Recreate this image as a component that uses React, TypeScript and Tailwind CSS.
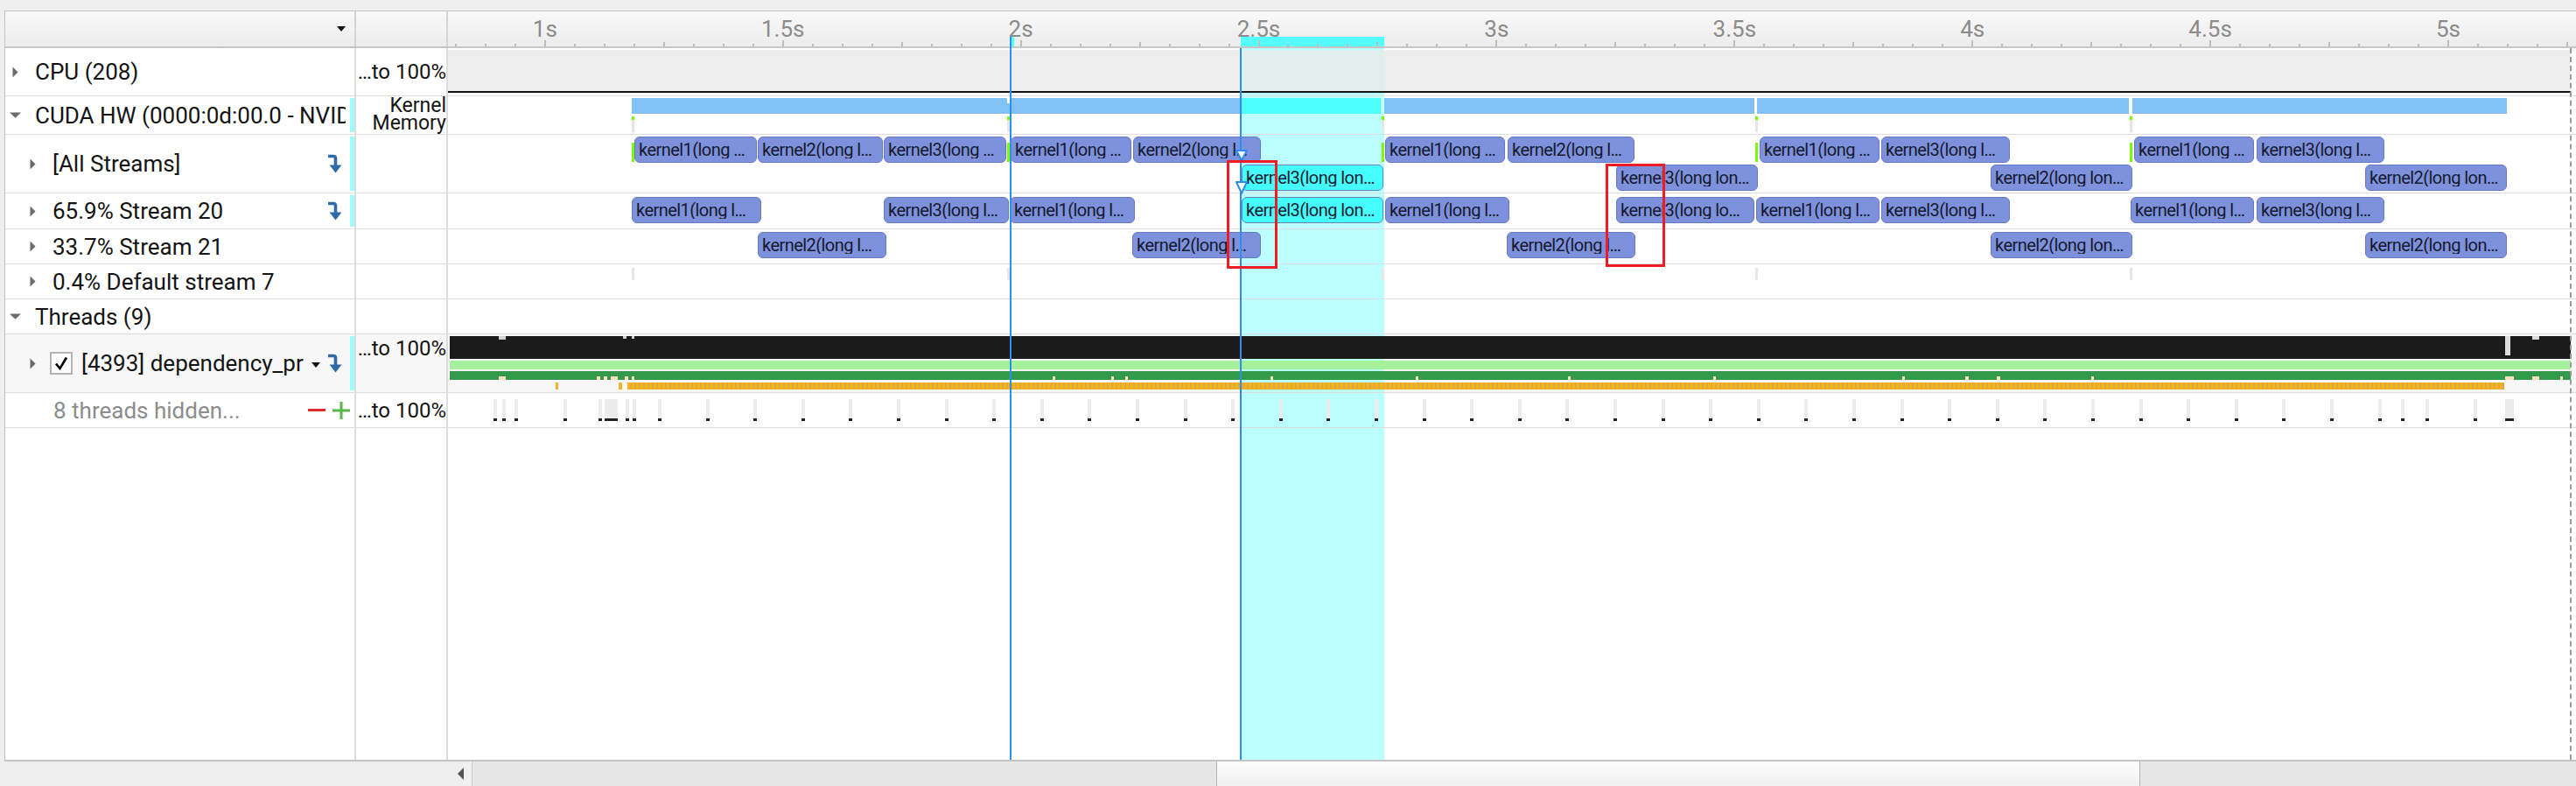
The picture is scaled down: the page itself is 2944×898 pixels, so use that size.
import React from "react";

const X0 = 512;
const rx = (x: number) => x - X0;
const tx = (t: number) => 79 + 543.8 * t;

type K = [number, number, string, boolean?];

const ALL1: K[] = [
  [725, 865, "kernel1(long …"],
  [866, 1009, "kernel2(long l…"],
  [1010, 1150, "kernel3(long …"],
  [1155, 1293, "kernel1(long …"],
  [1295, 1441, "kernel2(long l…"],
  [1583, 1720, "kernel1(long …"],
  [1723, 1868, "kernel2(long l…"],
  [2011, 2148, "kernel1(long …"],
  [2150, 2297, "kernel3(long l…"],
  [2439, 2576, "kernel1(long …"],
  [2579, 2725, "kernel3(long l…"],
];
const ALL2: K[] = [
  [1419, 1581, "kernel3(long lon…", true],
  [1847, 2009, "kernel3(long lon…"],
  [2275, 2437, "kernel2(long lon…"],
  [2703, 2865, "kernel2(long lon…"],
];
const S20: K[] = [
  [722, 870, "kernel1(long l…"],
  [1010, 1153, "kernel3(long l…"],
  [1154, 1297, "kernel1(long l…"],
  [1419, 1581, "kernel3(long lon…", true],
  [1583, 1725, "kernel1(long l…"],
  [1847, 2005, "kernel3(long lo…"],
  [2007, 2148, "kernel1(long l…"],
  [2150, 2297, "kernel3(long l…"],
  [2435, 2576, "kernel1(long l…"],
  [2579, 2725, "kernel3(long l…"],
];
const S21: K[] = [
  [866, 1013, "kernel2(long l…"],
  [1294, 1441, "kernel2(long l…"],
  [1722, 1869, "kernel2(long l…"],
  [2275, 2437, "kernel2(long lon…"],
  [2703, 2865, "kernel2(long lon…"],
];

const MARKS = [722, 1151, 1579, 2006, 2434];

function Kernel({ k, top }: { k: K; top: number }) {
  const [a, b, label, sel] = k;
  return (
    <div
      className={`absolute h-[30px] rounded-[6px] border-[1.5px] flex items-center pl-[4px] pr-[1px] overflow-hidden whitespace-nowrap text-[20px] tracking-[-0.55px] leading-none text-[#161a2e] ${
        sel ? "bg-[#45ffff] border-[#6c7fd2]" : "bg-[#7e91dc] border-[#6577c6]"
      }`}
      style={{ left: rx(a), width: b - a, top }}
    >
      <span className="block overflow-hidden text-ellipsis">{label}</span>
    </div>
  );
}

const TriRight = () => (
  <svg width="7" height="13" viewBox="0 0 7 13">
    <polygon points="0.5,0.5 6.5,6.5 0.5,12.5" fill="#6b6b6b" />
  </svg>
);
const TriDown = () => (
  <svg width="13" height="7" viewBox="0 0 13 7">
    <polygon points="0,0.5 13,0.5 6.5,6.8" fill="#6b6b6b" />
  </svg>
);
const TriBox = ({ down }: { down?: boolean }) => (
  <div className="w-[22px] shrink-0 flex justify-center items-center">{down ? <TriDown /> : <TriRight />}</div>
);

const Hook = () => (
  <svg width="16" height="22" viewBox="0 0 16 22" className="shrink-0">
    <path d="M0 2.5H6Q8.5 2.5 8.5 5V14" fill="none" stroke="#2f6ba4" strokeWidth="3.6" />
    <polygon points="1.5,12.5 15.5,12.5 8.5,21.5" fill="#2f6ba4" />
  </svg>
);

const Cyan = () => <div className="w-[5px] shrink-0 self-stretch my-[2px] bg-[#9ffcfc]" />;

function Row({
  cls,
  c1,
  c2,
  tl,
  c2cls,
}: {
  cls: string;
  c1: React.ReactNode;
  c2?: React.ReactNode;
  tl?: React.ReactNode;
  c2cls?: string;
}) {
  return (
    <div className={`relative flex shrink-0 border-b border-[#dddddd] ${cls}`}>
      <div className="w-[399px] shrink-0 flex items-center">{c1}</div>
      <div className={`w-[105px] shrink-0 border-l-2 border-[#dcdcdc] flex ${c2cls ?? "items-center justify-end"}`}>{c2}</div>
      <div className="flex-1 border-l-2 border-[#dcdcdc] relative">{tl}</div>
    </div>
  );
}

const ToPct = () => <span className="text-[24px] leading-[26px] whitespace-nowrap">…to 100%</span>;

export default function App() {
  const ticks: React.ReactNode[] = [];
  for (let i = 13; i <= 84; i++) {
    const x = rx(tx(i / 16));
    const h = i % 8 === 0 ? 7 : i % 4 === 0 ? 5 : 3;
    ticks.push(<div key={i} className="absolute bottom-0 w-[2px] bg-[#bdbdbd]" style={{ left: x - 1, height: h }} />);
  }
  const labels = [1, 1.5, 2, 2.5, 3, 3.5, 4, 4.5, 5];

  const hidden: [number, number][] = [
    [564, 4], [574, 4], [588, 4], [644, 4], [684, 4], [691, 15], [715, 4], [723, 4],
  ];
  for (let i = 0; i <= 38; i++) hidden.push([Math.round(752 + i * 54.6), 4]);
  hidden.push([2744, 4], [2863, 10]);

  const peach: [number, number][] = [
    [570, 8], [682, 4], [690, 4], [698, 8], [714, 4], [722, 3], [1203, 3], [1270, 3], [1286, 3],
    [1452, 3], [1618, 3], [1792, 3], [1958, 3], [2174, 3], [2246, 4], [2282, 4], [2390, 3], [2863, 10], [2894, 8], [2926, 3],
  ];

  return (
    <div className="w-[2944px] h-[898px] bg-[#efefef] flex flex-col overflow-hidden [font-family:Roboto,sans-serif] text-[#141414]">
      <div className="h-[12px] shrink-0" />
      <div className="relative flex-1 min-h-0 ml-[5px] border-l border-t border-b-2 border-[#c4c4c4] bg-white flex flex-col">
        {/* selection band (behind rows) */}
        <div className="absolute left-[1412px] top-[42px] bottom-0 w-[164px] bg-[#bbffff]" />

        {/* header */}
        <div className="relative flex shrink-0 h-[42px] border-b-2 border-[#c6c6c6] bg-gradient-to-b from-[#f9f9f9] to-[#ececec]">
          <div className="w-[399px] shrink-0 flex items-center justify-end pr-[10px]">
            <svg width="10" height="6" viewBox="0 0 10 6">
              <polygon points="0,0 10,0 5,6" fill="#111" />
            </svg>
          </div>
          <div className="w-[105px] shrink-0 border-l-2 border-[#d4d4d4]" />
          <div className="flex-1 border-l-2 border-[#d4d4d4] relative">
            <div className="absolute left-[906px] top-[29px] h-[11px] w-[164px] bg-[#55ffff]" />
            <div className="absolute left-[642px] top-[29px] h-[11px] w-[5px] bg-[#55ffff]" />
            {ticks}
            {labels.map((t) => (
              <div
                key={t}
                className="absolute top-[7px] -translate-x-1/2 text-[26px] leading-[26px] text-[#8b8b8b] whitespace-nowrap"
                style={{ left: rx(tx(t)) }}
              >
                {t}s
              </div>
            ))}
          </div>
        </div>

        {/* CPU */}
        <Row
          cls="h-[55px]"
          c1={
            <>
              <TriBox />
              <span className="ml-[12px] text-[26px] leading-none whitespace-nowrap">CPU (208)</span>
            </>
          }
          c2={<ToPct />}
          tl={
            <>
              <div className="absolute left-0 top-[2px] h-[47px] w-[2426px] bg-[#ededed]" />
              <div className="absolute left-[906px] top-[2px] h-[47px] w-[164px] bg-[#e0eeee]" />
              <div className="absolute left-0 top-[49px] h-[2px] w-[2426px] bg-[#151515]" />
            </>
          }
        />

        {/* CUDA HW */}
        <Row
          cls="h-[44px]"
          c1={
            <>
              <TriBox down />
              <span className="ml-[12px] mr-[5px] flex-1 min-w-0 overflow-hidden text-[26px] leading-[30px] whitespace-nowrap">
                CUDA HW (0000:0d:00.0 - NVIDIA GeForce RTX 3090)
              </span>
              <Cyan />
            </>
          }
          c2cls="flex-col items-end pt-[1px]"
          c2={
            <>
              <span className="text-[23px] leading-[20px]">Kernel</span>
              <span className="text-[23px] leading-[20px]">Memory</span>
            </>
          }
          tl={
            <>
              <div className="absolute top-[2px] h-[18px] bg-[#83c1f4]" style={{ left: rx(722), width: 1578 - 722 }} />
              <div className="absolute top-[2px] h-[18px] bg-[#83c1f4]" style={{ left: rx(1582), width: 2005 - 1582 }} />
              <div className="absolute top-[2px] h-[18px] bg-[#83c1f4]" style={{ left: rx(2008), width: 2433 - 2008 }} />
              <div className="absolute top-[2px] h-[18px] bg-[#83c1f4]" style={{ left: rx(2437), width: 2865 - 2437 }} />
              <div className="absolute top-[2px] h-[18px] bg-[#4dffff]" style={{ left: rx(1419), width: 1578 - 1419 }} />
              <div className="absolute top-[2px] h-[6px] w-[3px] bg-white" style={{ left: rx(1151) }} />
              {MARKS.map((m) => (
                <React.Fragment key={m}>
                  <div className="absolute top-[23px] h-[4px] w-[3px] bg-[#7cfc00]" style={{ left: rx(m) }} />
                  <div className="absolute top-[27px] h-[14px] w-[3px] bg-[#e6e6e6]" style={{ left: rx(m) }} />
                </React.Fragment>
              ))}
            </>
          }
        />

        {/* All Streams */}
        <Row
          cls="h-[67px]"
          c1={
            <>
              <div className="pl-[20px] flex items-center flex-1 min-w-0">
                <TriBox />
                <span className="ml-[12px] text-[26px] leading-none whitespace-nowrap">[All Streams]</span>
              </div>
              <Hook />
              <div className="w-[9px] shrink-0" />
              <Cyan />
            </>
          }
          tl={
            <>
              {MARKS.map((m) => (
                <div key={m} className="absolute top-[9px] h-[22px] w-[3px] bg-[#7cfc00]" style={{ left: rx(m) }} />
              ))}
              {ALL1.map((k) => (
                <Kernel key={"a" + k[0]} k={k} top={2} />
              ))}
              {ALL2.map((k) => (
                <Kernel key={"b" + k[0]} k={k} top={34} />
              ))}
            </>
          }
        />

        {/* Stream 20 */}
        <Row
          cls="h-[41px]"
          c1={
            <>
              <div className="pl-[20px] flex items-center flex-1 min-w-0">
                <TriBox />
                <span className="ml-[12px] text-[26px] leading-none whitespace-nowrap">65.9% Stream 20</span>
              </div>
              <Hook />
              <div className="w-[9px] shrink-0" />
              <Cyan />
            </>
          }
          tl={
            <>
              {S20.map((k) => (
                <Kernel key={k[0]} k={k} top={4} />
              ))}
            </>
          }
        />

        {/* Stream 21 */}
        <Row
          cls="h-[40px]"
          c1={
            <div className="pl-[20px] flex items-center">
              <TriBox />
              <span className="ml-[12px] text-[26px] leading-none whitespace-nowrap">33.7% Stream 21</span>
            </div>
          }
          tl={
            <>
              {S21.map((k) => (
                <Kernel key={k[0]} k={k} top={3} />
              ))}
            </>
          }
        />

        {/* Default stream */}
        <Row
          cls="h-[40px]"
          c1={
            <div className="pl-[20px] flex items-center">
              <TriBox />
              <span className="ml-[12px] text-[26px] leading-none whitespace-nowrap">0.4% Default stream 7</span>
            </div>
          }
          tl={
            <>
              {MARKS.map((m) => (
                <div key={m} className="absolute top-[4px] h-[14px] w-[3px] bg-[#e6e6e6]" style={{ left: rx(m) }} />
              ))}
            </>
          }
        />

        {/* Threads */}
        <Row
          cls="h-[40px]"
          c1={
            <>
              <TriBox down />
              <span className="ml-[12px] text-[26px] leading-none whitespace-nowrap">Threads (9)</span>
            </>
          }
        />

        {/* 4393 thread */}
        <Row
          cls="h-[67px] bg-[#f7f7f7]"
          c1={
            <>
              <div className="pl-[20px] flex items-center flex-1 min-w-0">
                <TriBox />
                <div className="ml-[9px] w-[26px] h-[26px] shrink-0 border-2 border-[#b4b4b4] bg-white flex items-center justify-center">
                  <svg width="18" height="18" viewBox="0 0 18 18">
                    <path d="M3 9.5L7.5 15L15 2.5" fill="none" stroke="#000" strokeWidth="2.6" />
                  </svg>
                </div>
                <span className="ml-[10px] text-[26px] leading-none whitespace-nowrap">[4393] dependency_pr</span>
                <svg width="10" height="6" viewBox="0 0 10 6" className="ml-[9px] mt-[4px] shrink-0">
                  <polygon points="0,0 10,0 5,6" fill="#111" />
                </svg>
              </div>
              <Hook />
              <div className="w-[9px] shrink-0" />
              <Cyan />
            </>
          }
          c2cls="items-start justify-end pt-[3px]"
          c2={<ToPct />}
          tl={
            <>
              <div className="absolute left-[906px] top-0 bottom-0 w-[164px] bg-[#bbffff]" />
              <div className="absolute left-[2px] top-[2px] h-[26px] w-[2424px] bg-[#1b1b1b]" />
              <div className="absolute top-[2px] h-[4px] w-[8px] bg-[#d0d0d0]" style={{ left: rx(570) }} />
              <div className="absolute top-[2px] h-[3px] w-[4px] bg-[#d0d0d0]" style={{ left: rx(712) }} />
              <div className="absolute top-[2px] h-[3px] w-[3px] bg-[#d0d0d0]" style={{ left: rx(722) }} />
              <div className="absolute top-[2px] h-[22px] w-[6px] bg-[#dcdcdc]" style={{ left: rx(2863) }} />
              <div className="absolute top-[2px] h-[4px] w-[8px] bg-[#dcdcdc]" style={{ left: rx(2894) }} />
              <div className="absolute left-[2px] top-[30px] h-[10px] w-[2424px] bg-[#a6f19c]" />
              <div className="absolute left-[2px] top-[42px] h-[10px] w-[2424px] bg-[#339a4b]" />
              {peach.map(([x, w]) => (
                <div key={x} className="absolute top-[48px] h-[4px] bg-[#fcdcc2]" style={{ left: rx(x), width: w }} />
              ))}
              <div className="absolute top-[55px] h-[8px] w-[3px] bg-[#f2b230]" style={{ left: rx(635) }} />
              <div className="absolute top-[55px] h-[8px] w-[4px] bg-[#f2b230]" style={{ left: rx(707) }} />
              <div
                className="absolute top-[55px] h-[8px] [background:repeating-linear-gradient(90deg,#f6b318_0px,#f6b318_3px,#dda945_3px,#dda945_5px)]"
                style={{ left: rx(717), width: 2862 - 717 }}
              />
            </>
          }
        />

        {/* hidden threads */}
        <Row
          cls="h-[40px]"
          c1={
            <>
              <span className="pl-[55px] flex-1 text-[26px] leading-none whitespace-nowrap text-[#8c8c8c]">8 threads hidden...</span>
              <div className="w-[20px] h-[3px] bg-[#e42b2b] shrink-0" />
              <svg width="20" height="20" viewBox="0 0 20 20" className="ml-[8px] mr-[5px] shrink-0">
                <rect x="0" y="8.5" width="20" height="3" fill="#56b646" />
                <rect x="8.5" y="0" width="3" height="20" fill="#56b646" />
              </svg>
            </>
          }
          c2={<ToPct />}
          tl={
            <>
              {hidden.map(([x, w]) => (
                <React.Fragment key={x}>
                  <div className="absolute top-[7px] h-[23px] bg-[#ececec]" style={{ left: rx(x), width: w }} />
                  <div className="absolute top-[29px] h-[3px] bg-[#222]" style={{ left: rx(x), width: w }} />
                </React.Fragment>
              ))}
            </>
          }
        />

        {/* filler */}
        <div className="relative flex flex-1">
          <div className="w-[399px] shrink-0" />
          <div className="w-[105px] shrink-0 border-l-2 border-[#dcdcdc]" />
          <div className="flex-1 border-l-2 border-[#dcdcdc]" />
        </div>

        {/* overlays */}
        <div className="absolute left-[2931px] top-[42px] bottom-0 border-l-2 border-dashed border-[#9b9b9b] z-10" />
        <div className="absolute left-[1148px] top-[29px] bottom-0 w-[2px] bg-[#2b8ff0] z-10" />
        <div className="absolute left-[1411px] top-[42px] bottom-0 w-[2px] bg-[#2b8ff0] z-10" />
        <svg className="absolute left-[1406px] top-[158px] z-10" width="14" height="13" viewBox="0 0 14 13">
          <polygon points="1,1 13,1 7,12" fill="white" stroke="#2a8cf0" strokeWidth="2" />
        </svg>
        <svg className="absolute left-[1406px] top-[194px] z-10" width="14" height="15" viewBox="0 0 14 15">
          <polygon points="1,1 13,1 7,14" fill="white" stroke="#2a8cf0" strokeWidth="2" />
        </svg>
        <div className="absolute left-[1396px] top-[170px] w-[58px] h-[124px] border-[3px] border-[#ee1c24] z-20" />
        <div className="absolute left-[1829px] top-[174px] w-[68px] h-[118px] border-[3px] border-[#ee1c24] z-20" />
      </div>

      {/* scrollbar */}
      <div className="h-[28px] shrink-0 flex">
        <div className="w-[514px] shrink-0 bg-[#efefef]" />
        <div className="w-[25px] shrink-0 bg-[#efefef] flex items-center justify-center">
          <svg width="7" height="14" viewBox="0 0 7 14">
            <polygon points="7,0 0,7 7,14" fill="#555" />
          </svg>
        </div>
        <div className="w-[851px] shrink-0 bg-[#e6e6e6] border-l border-[#c8c8c8]" />
        <div className="w-[1056px] shrink-0 bg-gradient-to-b from-[#fdfdfd] to-[#f0f0f0] border-l border-r border-[#b4b4b4]" />
        <div className="flex-1 bg-[#e6e6e6]" />
      </div>
    </div>
  );
}
